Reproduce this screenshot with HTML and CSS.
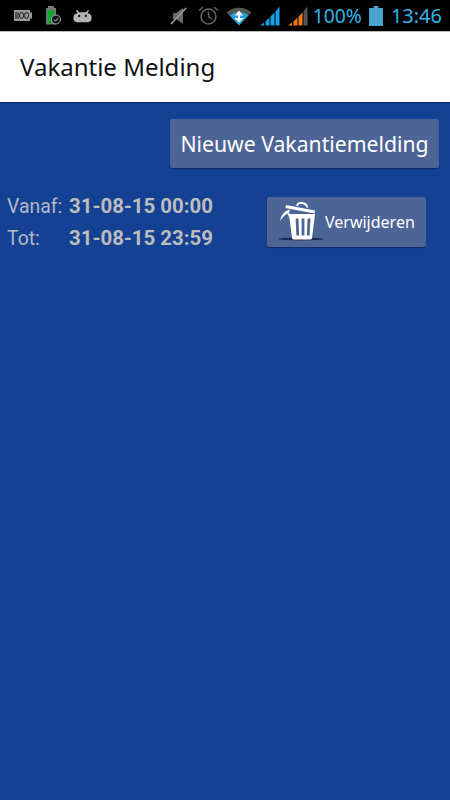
FILE: index.html
```html
<!DOCTYPE html>
<html lang="nl">
<head>
  <meta charset="UTF-8" />
  <meta name="viewport" content="width=device-width, initial-scale=1.0" />
  <title>Vakantie Melding</title>
  <link rel="stylesheet" href="styles.css">
</head>
<body>
  <!-- statusbalk -->
  <div class="statusbar">
    <div class="status-left">
      <svg class="ic-usb" width="20" height="13" viewBox="0 0 20 13">
        <path d="M1 1h16v2.500h2v6h-2V12H1z" fill="#9a9a9a"/>
        <path d="M3 3v7M5 3v7" stroke="#111" stroke-width="1" fill="none"/>
        <ellipse cx="8.500" cy="6.500" rx="2" ry="3" fill="none" stroke="#111"/>
        <ellipse cx="13.500" cy="6.500" rx="2" ry="3" fill="none" stroke="#111"/>
      </svg>
      <svg class="ic-batt" width="16" height="19" viewBox="0 0 16 19">
        <path d="M3 0h6v2h2v16.500H1V2h2z" fill="#777"/>
        <rect x="2.500" y="4" width="7" height="13" fill="#16a32e"/>
        <circle cx="11" cy="13.500" r="4.500" fill="#111" stroke="#aaa"/>
        <path d="M9 13.500l1.500 1.700 2.500-3" stroke="#ccc" fill="none"/>
      </svg>
      <svg class="ic-droid" width="19" height="14" viewBox="0 0 20 14">
        <path d="M4 0.500l2.500 2.500h7L16 0.500 16.800 1.500l-1.500 2.500c2.500 0.500 4.200 2 4.200 4v2c0 2-1.500 3.500-3.500 3.500h-12C2 13.500 0.500 12 0.500 10V8c0-2 1.700-3.500 4.200-4L3.200 1.500z" fill="#b4b4b4"/>
        <circle cx="6.500" cy="7" r="1.200" fill="#111"/>
        <circle cx="13.500" cy="7" r="1.200" fill="#111"/>
      </svg>
    </div>
    <div class="status-right">
      <svg class="ic-mute" width="18" height="18" viewBox="0 0 18 18">
        <path d="M3 6h3l7-5v16l-7-5H3z" fill="#6a6a6a"/>
        <path d="M1 17L16 1" stroke="#999" stroke-width="1.800"/>
      </svg>
      <svg class="ic-alarm" width="21" height="19" viewBox="0 0 21 19" fill="none" stroke="#666">
        <circle cx="10.500" cy="10.500" r="7.500" stroke-width="1.500"/>
        <path d="M10.500 5.500v5.300l3.500 2.200" stroke-width="1.300"/>
        <path d="M1 4.500L5 1M20 4.500L16 1" stroke-width="1.500"/>
      </svg>
      <svg class="ic-wifi" width="26" height="20" viewBox="0 0 26 20">
        <path d="M0.500 6.500C7 0 19 0 25.500 6.500L22.500 9.500C17 4.500 9 4.500 3.500 9.500z" fill="#555"/>
        <path d="M3.500 9.500C9 4.500 17 4.500 22.500 9.500L13 19.500z" fill="#2b9fd8"/>
        <path d="M13 4.500l4 5h-3v2.500h3.500L13 16.500 8.500 12H12V9.500H9z" fill="#fff"/>
      </svg>
      <svg class="ic-signal" width="20" height="20" viewBox="0 0 20 20">
        <path d="M0 19.500h4v-3zM5.500 19.500h4v-8l-4 4zM10.500 19.500h4V6.500l-4 4zM15.500 19.500h4V.5l-4 5z" fill="#1aa0e6"/>
      </svg>
      <svg class="ic-signal" width="20" height="20" viewBox="0 0 20 20">
        <path d="M0 19.500h4v-3zM5.500 19.500h4v-8l-4 4zM10.500 19.500h4V6.500l-4 4z" fill="#f07818"/>
        <path d="M15.500 19.500h4V.5l-4 5z" fill="#555"/>
      </svg>
      <span class="pct">100%</span>
      <svg class="ic-level" width="14" height="20" viewBox="0 0 14 20">
        <path d="M4.500 0h5v2H14v18H0V2h4.500z" fill="#4aa3cf"/>
      </svg>
      <span class="clock">13:46</span>
    </div>
  </div>

  <div class="actionbar">Vakantie Melding</div>

  <div class="content">
    <div class="top-row">
      <button class="btn btn-new">Nieuwe Vakantiemelding</button>
    </div>
    <div class="melding">
      <div class="dates">
        <span class="lbl">Vanaf:</span><span class="val">31-08-15 00:00</span>
        <span class="lbl">Tot:</span><span class="val">31-08-15 23:59</span>
      </div>
      <button class="btn btn-del">
        <svg class="ic-trash" width="48" height="44" viewBox="0 0 48 44">
          <ellipse cx="24" cy="39" rx="23" ry="1.500" fill="#1a2a55"/>
          <path d="M12 14h26l-3 24q-.2 1.500-2 1.500H17q-1.800 0-2-1.500z" fill="#fff"/>
          <path d="M20 18.500l.8 17M26 18.500v17M32 18.500l-.8 17" stroke="#4d6596" stroke-width="2.800" fill="none"/>
          <path d="M9 5l29 5.500-.5 3-29-5.500z" fill="#fff"/>
          <path d="M20 6q.5-3.500 5-3t5.500 4.500" stroke="#fff" stroke-width="1.800" fill="none"/>
          <path d="M3 21q2-10 10-11.500l-1 3 1 7-2.500-6q-4 2-7.500 7.500z" fill="#fff"/>
        </svg>
        <span>Verwijderen</span>
      </button>
    </div>
  </div>
</body>
</html>
```

FILE: styles.css
```css
html, body {
  margin: 0;
  height: 100%;
}
body {
  width: 450px;
  height: 800px;
  overflow: hidden;
  display: flex;
  flex-direction: column;
  font-family: "Noto Sans", "Open Sans", sans-serif;
  background-color: #144194;
}
.statusbar {
  height: 31px;
  background-color: #000;
  display: flex;
  align-items: center;
  justify-content: space-between;
  padding: 0 8px 0 13px;
  flex-shrink: 0;
}
.status-left, .status-right {
  display: flex;
  align-items: center;
}
.status-left svg {
  margin-right: 12px;
}
.status-right svg {
  margin-right: 8px;
}
.status-right .ic-mute {
  margin-right: 10px;
}
.status-right .ic-alarm {
  margin-right: 7px;
}
.status-right .ic-signal {
  margin-right: 8px;
}
.status-right .ic-signal + .pct {
  margin-left: -3px;
}
.pct {
  font-size: 19.3px;
  color: #33b5e5;
  margin-right: 7px;
}
.clock {
  font-size: 20px;
  color: #33b5e5;
}
.actionbar {
  height: 68px;
  padding-bottom: 2px;
  background-color: #fff;
  border-top: 1px solid #bbb;
  display: flex;
  align-items: center;
  padding-left: 20px;
  font-size: 24px;
  color: #111;
  flex-shrink: 0;
  border-bottom: 1px solid #0a1f66;
}
.content {
  flex: 1;
  padding: 16px 11px 0 7px;
}
.top-row {
  display: flex;
  justify-content: flex-end;
}
.btn {
  background-color: #4d6596;
  color: #fff;
  border: none;
  border-radius: 2px;
  font-family: "Noto Sans", "Open Sans", sans-serif;
  box-shadow: 0 1px 1px #0d2c6b;
}
.btn-new {
  width: 269px;
  height: 49px;
  font-size: 21.2px;
  padding: 0 0 1px;
}
.melding {
  display: flex;
  justify-content: space-between;
  margin-top: 29px;
  padding-right: 13px;
}
.dates {
  display: grid;
  grid-template-columns: 62px auto;
  grid-auto-rows: 32px;
  margin-top: -7px;
  align-items: center;
  font-family: Roboto, sans-serif;
  font-size: 20.4px;
  color: #bdbdbd;
}
.lbl {
  font-size: 19.4px;
  color: #b4b8c4;
}
.val {
  font-weight: bold;
}
.btn-del {
  width: 159px;
  height: 50px;
  display: flex;
  align-items: center;
  padding: 0 0 0 10px;
  font-size: 16px;
}
.ic-trash {
  flex-shrink: 0;
}
```
